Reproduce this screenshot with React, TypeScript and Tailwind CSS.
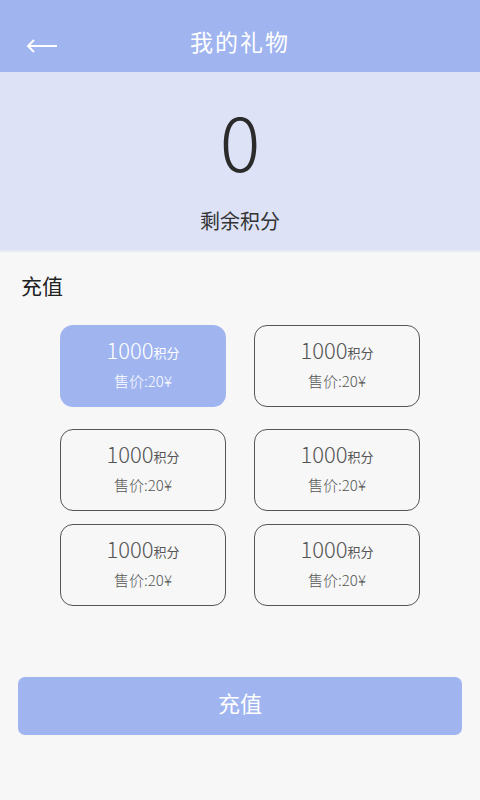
import React, { useState } from 'react';

interface Pack {
  id: number;
  points: number;
  price: number;
}

const packs: Pack[] = [
  { id: 1, points: 1000, price: 20 },
  { id: 2, points: 1000, price: 20 },
  { id: 3, points: 1000, price: 20 },
  { id: 4, points: 1000, price: 20 },
  { id: 5, points: 1000, price: 20 },
  { id: 6, points: 1000, price: 20 },
];

const font = { fontFamily: '"Noto Sans CJK SC", "Noto Sans", sans-serif' };

const App = () => {
  const [selected, setSelected] = useState(1);

  const rowGaps = ['mt-[22px]', 'mt-[13px]'];
  const rows = [packs.slice(0, 2), packs.slice(2, 4), packs.slice(4, 6)];

  return (
    <div className="w-[480px] h-[800px] bg-[#f7f7f7] flex flex-col" style={font}>
      {/* header */}
      <div className="h-[72px] bg-[#a0b5f0] flex items-center relative">
        <button className="absolute left-[26px] top-[39px] text-white">
          <svg width="32" height="14" viewBox="0 0 32 14" fill="none" stroke="white" strokeWidth="2">
            <path d="M2 7h29" />
            <path d="M8 1L2 7l6 6" />
          </svg>
        </button>
        <h1 className="w-full text-center text-white text-[23px] tracking-[2px] leading-none mt-[10px]">我的礼物</h1>
      </div>

      {/* score */}
      <div className="h-[180px] bg-[#dde2f7] flex flex-col items-center border-b-2 border-[#e9ebf5]">
        <div className="text-[#2b2b2b] text-[76px] font-light leading-none mt-[29px]">0</div>
        <div className="text-[#333] text-[20px] leading-none mt-[34px]">剩余积分</div>
      </div>

      {/* recharge */}
      <div className="px-[21px] pt-[23px] text-[21px] text-[#222] leading-none">充值</div>

      <div className="mt-[29px] flex flex-col">
        {rows.map((row, i) => (
          <div key={i} className={`flex justify-center gap-[28px] ${i > 0 ? rowGaps[i - 1] : ''}`}>
            {row.map((p) => {
              const active = p.id === selected;
              return (
                <button
                  key={p.id}
                  onClick={() => setSelected(p.id)}
                  className={`w-[166px] h-[82px] rounded-[13px] flex flex-col items-center justify-center ${
                    active ? 'bg-[#a0b5f0] text-white' : 'border-[1.5px] border-[#555] text-[#555]'
                  }`}
                >
                  <div className="leading-none flex items-end -mt-[6px]">
                    <span className="text-[22px] font-light">{p.points}</span>
                    <span className="text-[13px] mb-[1px]">积分</span>
                  </div>
                  <div className="text-[15px] font-light leading-none mt-[13px]">售价:{p.price}¥</div>
                </button>
              );
            })}
          </div>
        ))}
      </div>

      <div className="px-[18px] mt-[71px]">
        <button className="w-full h-[58px] rounded-[7px] bg-[#a0b5f0] text-white text-[22px] leading-none pb-[8px]">充值</button>
      </div>
    </div>
  );
};

export default App;
